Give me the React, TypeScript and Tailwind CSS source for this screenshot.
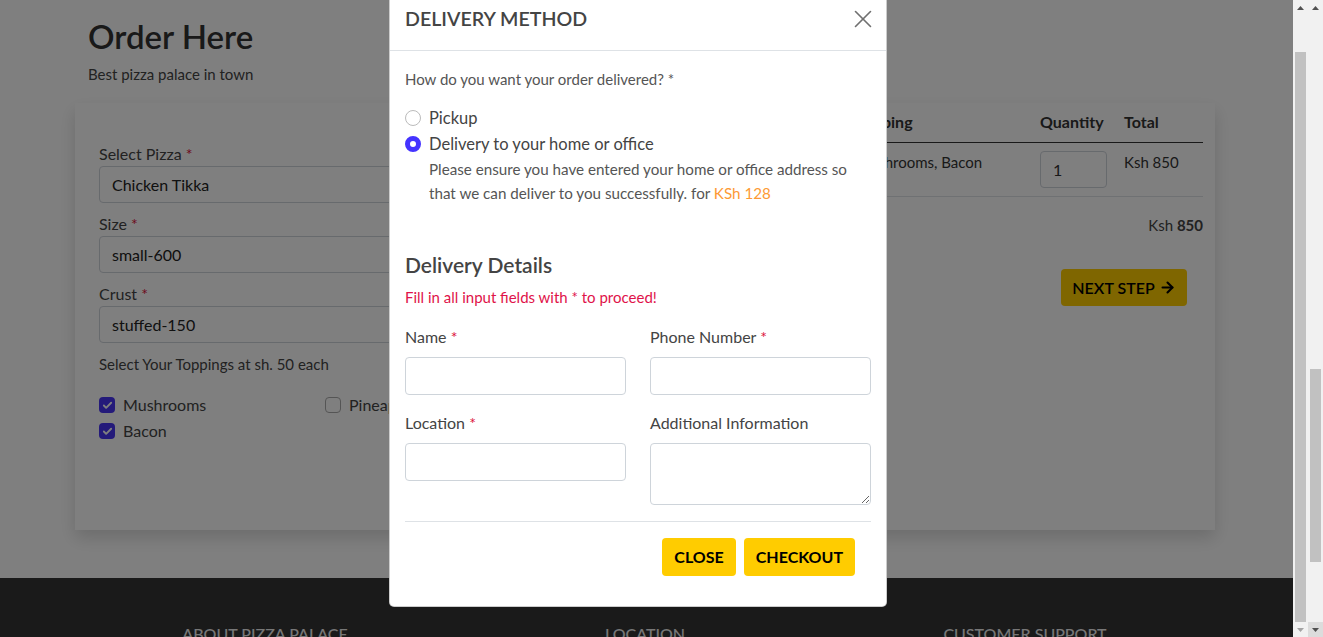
import { useLayoutEffect, useRef } from 'react'
import { ArrowRight, Check, X } from 'lucide-react'

const toppings = [
  { name: 'Mushrooms', checked: true },
  { name: 'Pineapple', checked: false },
  { name: 'Bacon', checked: true },
]

function Req() {
  return <span className="text-[#dc143c]">*</span>
}

function SelectBox({ label, value }: { label: string; value: string }) {
  return (
    <div>
      <div className="text-[16px] leading-[24px] text-[#444]">
        {label} <Req />
      </div>
      <div className="h-[37px] flex items-center px-[12px] border border-[#ced4da] rounded-[4px] text-[16px] text-[#222]">
        {value}
      </div>
    </div>
  )
}

function TickBox({ checked }: { checked: boolean }) {
  return checked ? (
    <span className="w-4 h-4 rounded-[4px] bg-[#4834f4] flex items-center justify-center shrink-0">
      <Check size={11} strokeWidth={4} className="text-white" />
    </span>
  ) : (
    <span className="w-4 h-4 rounded-[4px] border border-[#aaa] bg-white shrink-0" />
  )
}

function Arrow({ up, dim }: { up?: boolean; dim?: boolean }) {
  return (
    <svg width="7" height="4" viewBox="0 0 7 4" className={dim ? 'text-[#a3a3a3]' : 'text-[#505050]'}>
      <polygon points={up ? '3.5,0 7,4 0,4' : '0,0 7,0 3.5,4'} fill="currentColor" />
    </svg>
  )
}

function TopSection() {
  // scrolled out of view above the order form
  return (
    <section className="h-[1168px] flex flex-col">
      <nav className="h-[72px] flex items-center justify-between px-[75px] bg-[#343434] text-white">
        <span className="text-[22px] font-bold">Pizza Palace</span>
        <div className="flex gap-6 text-[16px]">
          <span>Home</span>
          <span>Menu</span>
          <span>Order</span>
          <span>Contact</span>
        </div>
      </nav>
      <div className="flex-1 flex flex-col items-center justify-center gap-4">
        <h1 className="text-[48px] font-bold text-[#333]">Best pizza palace in town</h1>
        <p className="text-[18px] text-[#555]">Freshly baked, delivered hot to your door.</p>
      </div>
    </section>
  )
}

function OrderSection() {
  return (
    <section className="h-[578px] pt-[16px]">
      <h2 className="ml-[88px] text-[33px] leading-[40px] font-semibold text-[#333]">Order Here</h2>
      <p className="ml-[88px] mt-[6px] text-[15px] leading-[24px] text-[#444]">Best pizza palace in town</p>

      <div className="ml-[75px] mt-[17px] w-[1140px] h-[427px] bg-white shadow-[0_8px_16px_rgba(0,0,0,0.15)] pl-[24px] pr-[12px] flex gap-[24px]">
        {/* form */}
        <div className="w-[477px] pt-[39px] flex flex-col gap-[9px]">
          <SelectBox label="Select Pizza" value="Chicken Tikka" />
          <SelectBox label="Size" value="small-600" />
          <SelectBox label="Crust" value="stuffed-150" />
          <p className="text-[15px] leading-[24px] text-[#444]">Select Your Toppings at sh. 50 each</p>
          <div className="mt-[7px] grid grid-cols-[226px_226px]">
            {toppings.map(t => (
              <div key={t.name} className="h-[26px] flex items-center gap-[8px] text-[16px] text-[#444]">
                <TickBox checked={t.checked} />
                {t.name}
              </div>
            ))}
          </div>
        </div>

        {/* summary */}
        <div className="w-[603px] flex flex-col">
          <table className="w-full table-fixed text-[16px] text-[#333]">
            <colgroup>
              <col className="w-[100px]" />
              <col className="w-[76px]" />
              <col className="w-[72px]" />
              <col className="w-[184px]" />
              <col className="w-[84px]" />
              <col className="w-[87px]" />
            </colgroup>
            <thead>
              <tr className="border-b border-[#333]">
                {['Pizza', 'Size', 'Crust', 'Topping', 'Quantity', 'Total'].map(h => (
                  <th key={h} className="text-left font-bold px-[8px] pt-[7px] pb-[8px] leading-[24px]">
                    {h}
                  </th>
                ))}
              </tr>
            </thead>
            <tbody>
              <tr className="border-b border-[#dee2e6] align-top">
                <td className="px-[8px] pt-[9px] leading-[20px] text-[15px] whitespace-nowrap">Tikka</td>
                <td className="px-[8px] pt-[9px] leading-[20px] text-[15px]">small</td>
                <td className="px-[8px] pt-[9px] leading-[20px] text-[15px]">stuffed</td>
                <td className="px-[8px] pt-[9px] leading-[20px] text-[15px]">Mushrooms, Bacon</td>
                <td className="px-[8px] py-[8px]">
                  <div className="w-[67px] h-[37px] border border-[#ced4da] rounded-[4px] flex items-center px-[12px] text-[16px]">
                    1
                  </div>
                </td>
                <td className="px-[8px] pt-[9px] leading-[20px] text-[15px]">Ksh 850</td>
              </tr>
            </tbody>
          </table>
          <p className="mt-[16px] text-right text-[15px] leading-[24px] text-[#444]">
            Ksh <span className="font-bold">850</span>
          </p>
          <div className="mt-[32px] flex justify-end pr-[16px]">
            <button className="h-[37px] w-[126px] flex items-center justify-center gap-[4px] bg-[#ffcc00] rounded-[4px] text-[16px] font-semibold text-black">
              NEXT STEP
              <ArrowRight size={17} strokeWidth={3} />
            </button>
          </div>
        </div>
      </div>
    </section>
  )
}

function Footer() {
  return (
    <footer className="h-[257px] bg-[#343434] pt-[44px]">
      <div className="ml-[75px] w-[1140px] grid grid-cols-3 text-center text-[#eee]">
        <div>
          <h3 className="text-[16px] leading-[24px] font-medium uppercase">About Pizza Palace</h3>
          <p className="mt-3 text-[14px] text-[#bbb]">Serving hand-made pizzas since 2010.</p>
        </div>
        <div>
          <h3 className="text-[16px] leading-[24px] font-medium uppercase">Location</h3>
          <p className="mt-3 text-[14px] text-[#bbb]">Moi Avenue, Nairobi</p>
        </div>
        <div>
          <h3 className="text-[16px] leading-[24px] font-medium uppercase">Customer Support</h3>
          <p className="mt-3 text-[14px] text-[#bbb]">support@pizzapalace.co.ke</p>
        </div>
      </div>
    </footer>
  )
}

function Field({ label, required, tall }: { label: string; required?: boolean; tall?: boolean }) {
  return (
    <div>
      <label className="block text-[16px] leading-[24px] text-[#444]">
        {label} {required && <Req />}
      </label>
      {tall ? (
        <textarea className="mt-[8px] block w-full h-[62px] border border-[#ced4da] rounded-[4px]" />
      ) : (
        <input className="mt-[8px] block w-full h-[38px] border border-[#ced4da] rounded-[4px]" />
      )}
    </div>
  )
}

function DeliveryModal() {
  return (
    <div className="ml-[389px] mt-[28px] mb-[30px] w-[498px] bg-white border border-black/20 rounded-[5px]">
      <div className="flex items-center justify-between px-[15px] pt-[15px] pb-[16px] border-b border-[#dee2e6]">
        <h5 className="text-[19.6px] leading-[30px] font-semibold uppercase text-[#444]">Delivery Method</h5>
        <X size={30} strokeWidth={1.3} className="text-[#707070] -mr-[7px]" />
      </div>

      <div className="px-[15px] pt-[16px] pb-[30px]">
        <p className="text-[15px] leading-[24px] text-[#555]">How do you want your order delivered? *</p>

        <div className="mt-[15px] flex flex-col gap-[2px]">
          <label className="h-[24px] flex items-center gap-[8px] text-[16.5px] text-[#444]">
            <input type="radio" name="method" className="appearance-none w-4 h-4 rounded-full border border-[#bbb] bg-white checked:border-[5px] checked:border-[#4433ff]" />
            Pickup
          </label>
          <label className="h-[24px] flex items-center gap-[8px] text-[16.5px] text-[#444]">
            <input type="radio" name="method" defaultChecked className="appearance-none w-4 h-4 rounded-full border border-[#bbb] bg-white checked:border-[5px] checked:border-[#4433ff]" />
            Delivery to your home or office
          </label>
        </div>
        <p className="mt-[1px] pl-[24px] text-[15.2px] leading-[24px] text-[#555]">
          Please ensure you have entered your home or office address so
          <br />
          that we can deliver to you successfully. for <span className="text-[#fd9a35]">KSh 128</span>
        </p>

        <h4 className="mt-[48px] text-[21px] leading-[24px] font-semibold text-[#444]">Delivery Details</h4>
        <p className="mt-[8px] text-[15px] leading-[24px] text-[#e0134a]">Fill in all input fields with * to proceed!</p>

        <div className="mt-[16px] grid grid-cols-2 gap-x-[24px] gap-y-[16px] items-start">
          <Field label="Name" required />
          <Field label="Phone Number" required />
          <Field label="Location" required />
          <Field label="Additional Information" tall />
        </div>

        <hr className="mt-[16px] border-0 border-t border-[#dee2e6]" />

        <div className="mt-[16px] flex justify-end gap-[8px] pr-[16px]">
          <button className="h-[38px] px-[12px] bg-[#ffcc00] rounded-[4px] text-[16px] font-bold text-black">CLOSE</button>
          <button className="h-[38px] px-[12px] bg-[#ffcc00] rounded-[4px] text-[16px] font-bold text-black">CHECKOUT</button>
        </div>
      </div>
    </div>
  )
}

export default function App() {
  const pageRef = useRef<HTMLDivElement>(null)
  const overlayRef = useRef<HTMLDivElement>(null)

  useLayoutEffect(() => {
    if (pageRef.current) pageRef.current.scrollTop = 1168
    if (overlayRef.current) overlayRef.current.scrollTop = overlayRef.current.scrollHeight
  }, [])

  return (
    <div className="h-[637px] w-full overflow-hidden flex font-['Lato',sans-serif]">
      <div className="relative flex-1 min-w-0">
        <div ref={pageRef} className="h-full overflow-hidden bg-white">
          <TopSection />
          <OrderSection />
          <Footer />
        </div>

        {/* modal backdrop */}
        <div ref={overlayRef} className="absolute inset-0 overflow-hidden bg-black/50">
          <DeliveryModal />
        </div>
      </div>

      {/* modal scrollbar (scrolled to the bottom) */}
      <div className="w-[15px] flex flex-col bg-[#f1f1f1]">
        <div className="h-[15px] flex items-center justify-center">
          <Arrow up />
        </div>
        <div className="h-[37px]" />
        <div className="flex-1 mx-[2px] bg-[#c1c1c1]" />
        <div className="h-[15px] flex items-center justify-center">
          <Arrow dim />
        </div>
      </div>

      {/* page scrollbar */}
      <div className="w-[15px] flex flex-col bg-[#f1f1f1]">
        <div className="h-[15px] flex items-center justify-center">
          <Arrow up />
        </div>
        <div className="h-[354px]" />
        <div className="h-[193px] mx-[2px] bg-[#c1c1c1]" />
        <div className="flex-1" />
        <div className="h-[15px] flex items-center justify-center bg-[#dcdcdc]">
          <Arrow />
        </div>
      </div>
    </div>
  )
}
